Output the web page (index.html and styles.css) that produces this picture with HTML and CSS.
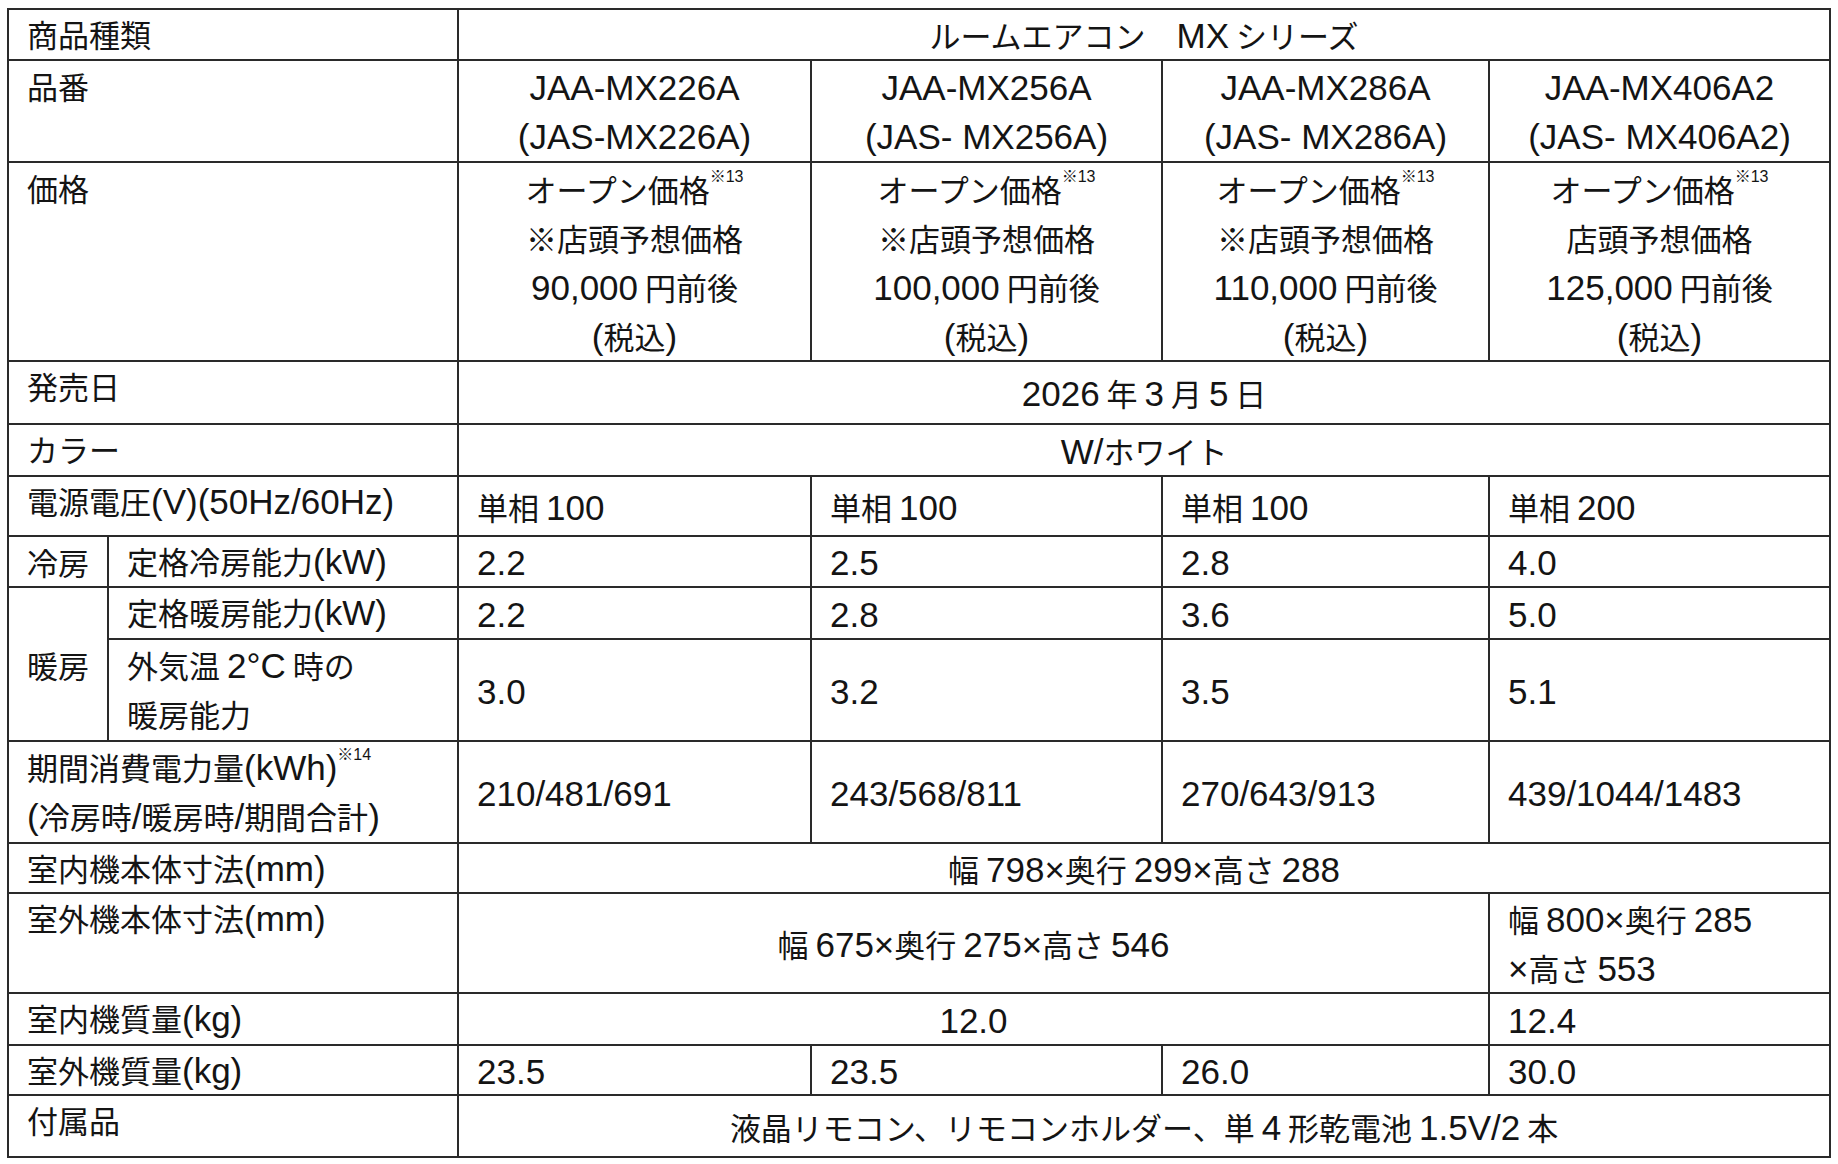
FILE: index.html
```html
<!DOCTYPE html>
<html lang="ja">
<head>
<meta charset="utf-8">
<title>ルームエアコン MX シリーズ 仕様</title>
<link rel="stylesheet" href="styles.css">
</head>
<body>
<table class="spec">
  <colgroup>
    <col class="c-a"><col class="c-b"><col class="c-1"><col class="c-2"><col class="c-3"><col class="c-4">
  </colgroup>
  <tbody>
    <tr class="h51">
      <th colspan="2">商品種類</th>
      <td colspan="4" class="ctr">ルームエアコン　<span class="l">MX</span> シリーズ</td>
    </tr>
    <tr class="h102">
      <th colspan="2">品番</th>
      <td class="ctr"><span class="l">JAA-MX226A<br>(JAS-MX226A)</span></td>
      <td class="ctr"><span class="l">JAA-MX256A<br>(JAS- MX256A)</span></td>
      <td class="ctr"><span class="l">JAA-MX286A<br>(JAS- MX286A)</span></td>
      <td class="ctr"><span class="l">JAA-MX406A2<br>(JAS- MX406A2)</span></td>
    </tr>
    <tr class="h199">
      <th colspan="2">価格</th>
      <td class="ctr">オープン価格<sup class="n">※13</sup><br>※店頭予想価格<br><span class="l">90,000</span> 円前後<br><span class="l">(</span>税込<span class="l">)</span></td>
      <td class="ctr">オープン価格<sup class="n">※13</sup><br>※店頭予想価格<br><span class="l">100,000</span> 円前後<br><span class="l">(</span>税込<span class="l">)</span></td>
      <td class="ctr">オープン価格<sup class="n">※13</sup><br>※店頭予想価格<br><span class="l">110,000</span> 円前後<br><span class="l">(</span>税込<span class="l">)</span></td>
      <td class="ctr">オープン価格<sup class="n">※13</sup><br>店頭予想価格<br><span class="l">125,000</span> 円前後<br><span class="l">(</span>税込<span class="l">)</span></td>
    </tr>
    <tr class="h63">
      <th colspan="2">発売日</th>
      <td colspan="4" class="ctr"><span class="l">2026</span> 年 <span class="l">3</span> 月 <span class="l">5</span> 日</td>
    </tr>
    <tr class="h52">
      <th colspan="2">カラー</th>
      <td colspan="4" class="ctr"><span class="l">W/</span>ホワイト</td>
    </tr>
    <tr class="h60">
      <th colspan="2">電源電圧<span class="l">(V)(50Hz/60Hz)</span></th>
      <td>単相 <span class="l">100</span></td>
      <td>単相 <span class="l">100</span></td>
      <td>単相 <span class="l">100</span></td>
      <td>単相 <span class="l">200</span></td>
    </tr>
    <tr class="h51">
      <th class="grp">冷房</th>
      <th>定格冷房能力<span class="l">(kW)</span></th>
      <td><span class="l">2.2</span></td>
      <td><span class="l">2.5</span></td>
      <td><span class="l">2.8</span></td>
      <td><span class="l">4.0</span></td>
    </tr>
    <tr class="h52">
      <th class="grp" rowspan="2">暖房</th>
      <th>定格暖房能力<span class="l">(kW)</span></th>
      <td><span class="l">2.2</span></td>
      <td><span class="l">2.8</span></td>
      <td><span class="l">3.6</span></td>
      <td><span class="l">5.0</span></td>
    </tr>
    <tr class="h102">
      <th class="two">外気温 <span class="l">2°C</span> 時の<br>暖房能力</th>
      <td><span class="l">3.0</span></td>
      <td><span class="l">3.2</span></td>
      <td><span class="l">3.5</span></td>
      <td><span class="l">5.1</span></td>
    </tr>
    <tr class="h102">
      <th colspan="2" class="two">期間消費電力量<span class="l">(kWh)</span><sup class="n">※14</sup><br><span class="l">(</span>冷房時<span class="l">/</span>暖房時<span class="l">/</span>期間合計<span class="l">)</span></th>
      <td><span class="l">210/481/691</span></td>
      <td><span class="l">243/568/811</span></td>
      <td><span class="l">270/643/913</span></td>
      <td><span class="l">439/1044/1483</span></td>
    </tr>
    <tr class="h50">
      <th colspan="2">室内機本体寸法<span class="l">(mm)</span></th>
      <td colspan="4" class="ctr">幅 <span class="l">798×</span>奥行 <span class="l">299×</span>高さ <span class="l">288</span></td>
    </tr>
    <tr class="h100">
      <th colspan="2">室外機本体寸法<span class="l">(mm)</span></th>
      <td colspan="3" class="ctr">幅 <span class="l">675×</span>奥行 <span class="l">275×</span>高さ <span class="l">546</span></td>
      <td class="two">幅 <span class="l">800×</span>奥行 <span class="l">285</span><br><span class="l">×</span>高さ <span class="l">553</span></td>
    </tr>
    <tr class="h52">
      <th colspan="2">室内機質量<span class="l">(kg)</span></th>
      <td colspan="3" class="ctr"><span class="l">12.0</span></td>
      <td><span class="l">12.4</span></td>
    </tr>
    <tr class="h50">
      <th colspan="2">室外機質量<span class="l">(kg)</span></th>
      <td><span class="l">23.5</span></td>
      <td><span class="l">23.5</span></td>
      <td><span class="l">26.0</span></td>
      <td><span class="l">30.0</span></td>
    </tr>
    <tr class="h62">
      <th colspan="2">付属品</th>
      <td colspan="4" class="ctr">液晶リモコン、リモコンホルダー、単 <span class="l">4</span> 形乾電池 <span class="l">1.5V/2</span> 本</td>
    </tr>
  </tbody>
</table>
</body>
</html>
```

FILE: styles.css
```css
html, body {
  margin: 0;
  background: #ffffff;
}

body {
  padding: 8px 0 0 7px;
  color: #141414;
  font-family: "Noto Sans CJK JP", "Noto Sans CJK SC", sans-serif;
  font-size: 31px;
}

.spec {
  border-collapse: collapse;
  table-layout: fixed;
  width: 1822px;
}

.c-a { width: 100px; }
.c-b { width: 350px; }
.c-1 { width: 353px; }
.c-2 { width: 351px; }
.c-3 { width: 327px; }
.c-4 { width: 341px; }

.spec th,
.spec td {
  border: 2px solid #2a2a2a;
  padding: 0 18px;
  line-height: 47px;
  font-weight: 400;
  white-space: nowrap;
}

.spec th.two,
.spec td.two,
.spec tr.h102 td,
.spec tr.h102 th,
.spec tr.h199 td,
.spec tr.h199 th {
  line-height: 49px;
}

.spec th {
  text-align: left;
  vertical-align: top;
}

.spec th.grp {
  vertical-align: middle;
}

.spec td {
  text-align: left;
  vertical-align: middle;
}

.spec td.ctr {
  text-align: center;
}

.l {
  font-family: "Liberation Sans", Arial, sans-serif;
  font-size: 35px;
  line-height: 35px;
}

.n {
  font-family: "Liberation Sans", "Noto Sans CJK JP", sans-serif;
  font-size: 16px;
  line-height: 0;
  vertical-align: 20px;
}

.spec th.grp {
  line-height: 47px;
}

.h50 { height: 50px; }
.h51 { height: 51px; }
.h52 { height: 52px; }
.h60 { height: 60px; }
.h62 { height: 62px; }
.h63 { height: 63px; }
.h100 { height: 100px; }
.h102 { height: 102px; }
.h199 { height: 199px; }
```
